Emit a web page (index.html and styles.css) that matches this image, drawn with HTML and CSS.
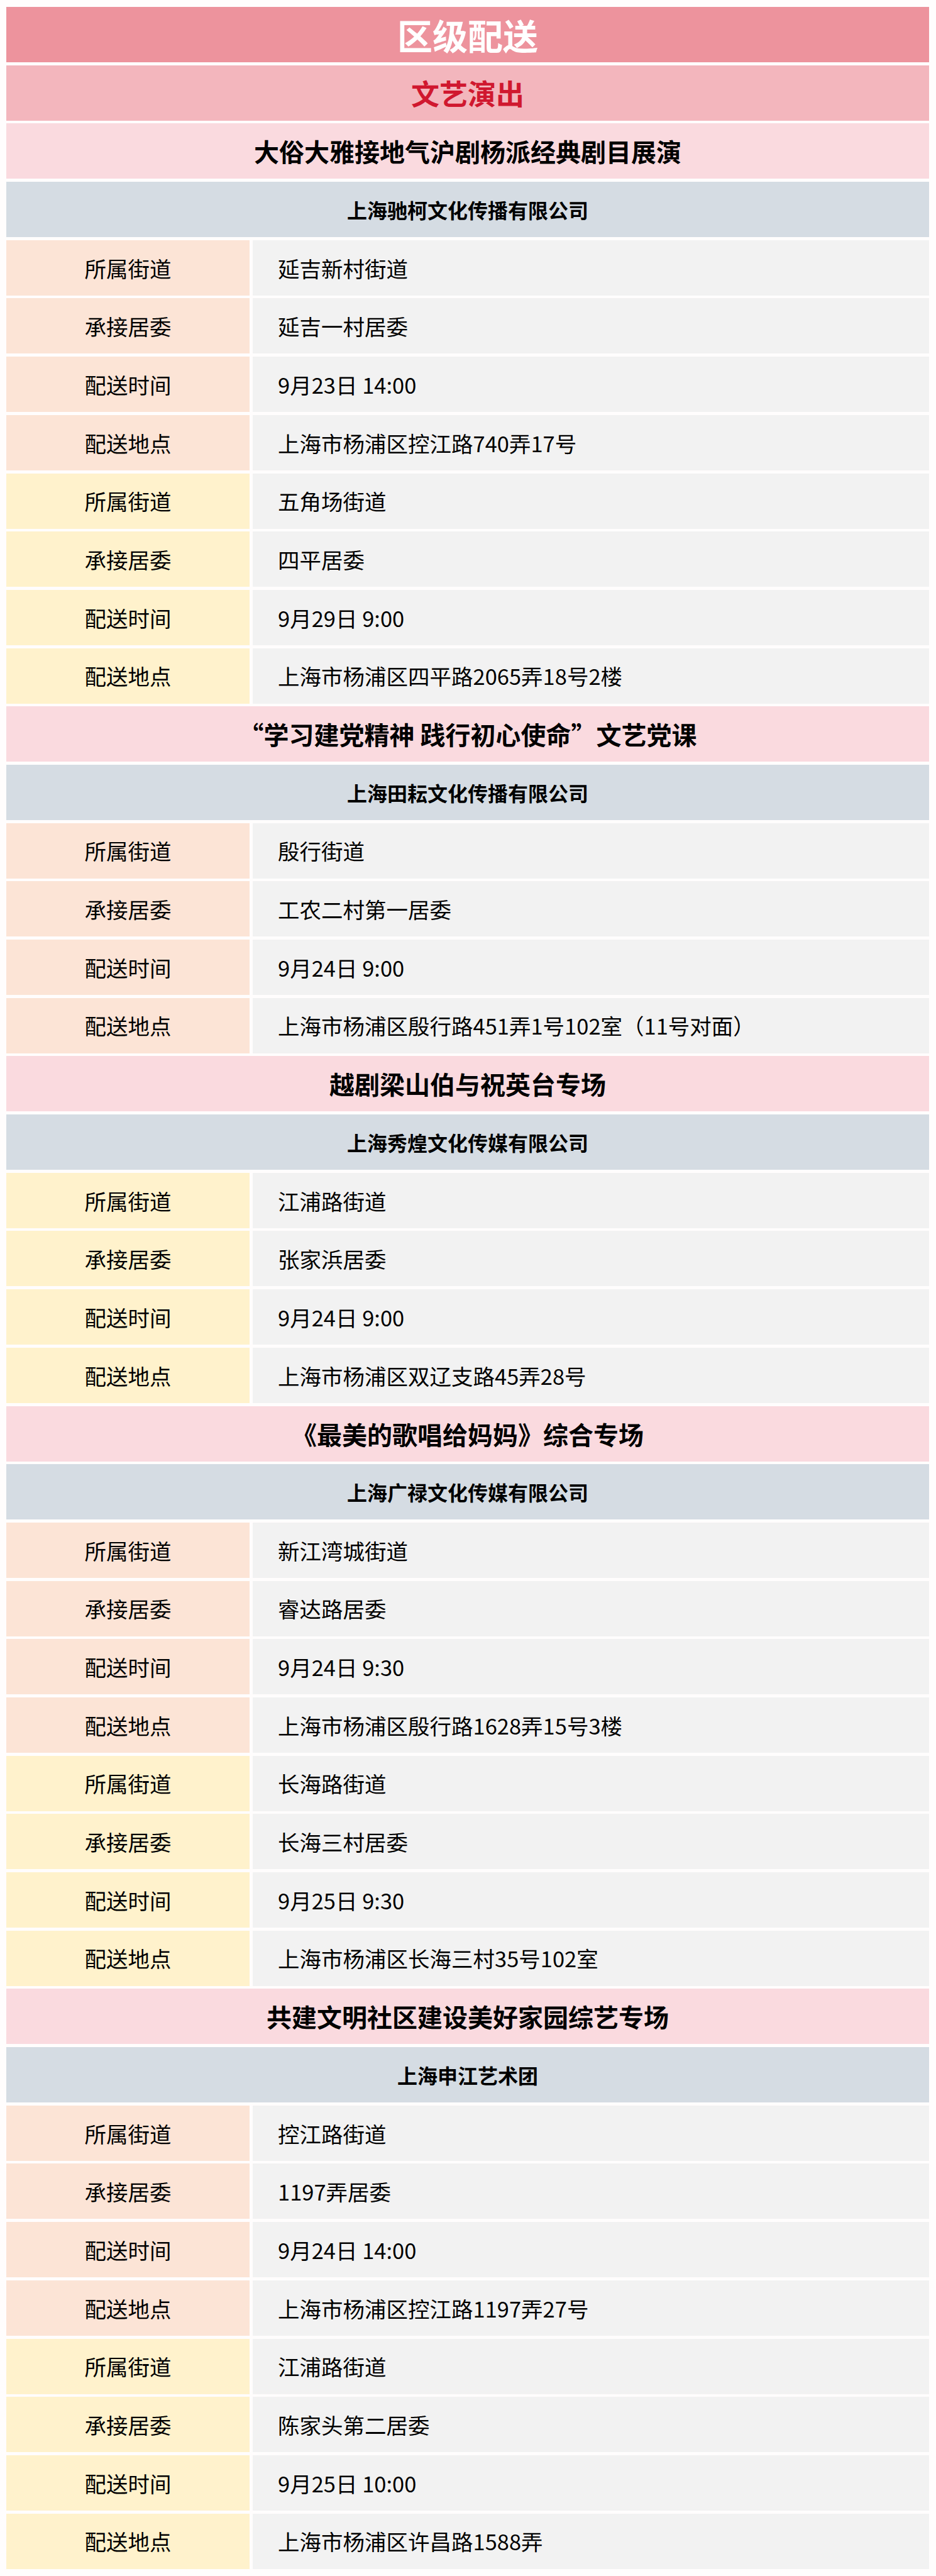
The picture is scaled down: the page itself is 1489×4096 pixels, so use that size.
FILE: index.html
```html
<!DOCTYPE html>
<html lang="zh-CN">
<head>
<meta charset="utf-8">
<title>区级配送</title>
<link rel="stylesheet" href="styles.css">
</head>
<body>
<div class="page">
  <div class="band title">区级配送</div>
  <div class="band section">文艺演出</div>

  <div class="band item">大俗大雅接地气沪剧杨派经典剧目展演</div>
  <div class="band company">上海驰柯文化传播有限公司</div>
  <div class="row peach"><div class="label">所属街道</div><div class="value">延吉新村街道</div></div>
  <div class="row peach"><div class="label">承接居委</div><div class="value">延吉一村居委</div></div>
  <div class="row peach"><div class="label">配送时间</div><div class="value">9月23日 14:00</div></div>
  <div class="row peach"><div class="label">配送地点</div><div class="value">上海市杨浦区控江路740弄17号</div></div>
  <div class="row yellow"><div class="label">所属街道</div><div class="value">五角场街道</div></div>
  <div class="row yellow"><div class="label">承接居委</div><div class="value">四平居委</div></div>
  <div class="row yellow"><div class="label">配送时间</div><div class="value">9月29日 9:00</div></div>
  <div class="row yellow"><div class="label">配送地点</div><div class="value">上海市杨浦区四平路2065弄18号2楼</div></div>

  <div class="band item">“学习建党精神 践行初心使命”文艺党课</div>
  <div class="band company">上海田耘文化传播有限公司</div>
  <div class="row peach"><div class="label">所属街道</div><div class="value">殷行街道</div></div>
  <div class="row peach"><div class="label">承接居委</div><div class="value">工农二村第一居委</div></div>
  <div class="row peach"><div class="label">配送时间</div><div class="value">9月24日 9:00</div></div>
  <div class="row peach"><div class="label">配送地点</div><div class="value">上海市杨浦区殷行路451弄1号102室（11号对面）</div></div>

  <div class="band item">越剧梁山伯与祝英台专场</div>
  <div class="band company">上海秀煌文化传媒有限公司</div>
  <div class="row yellow"><div class="label">所属街道</div><div class="value">江浦路街道</div></div>
  <div class="row yellow"><div class="label">承接居委</div><div class="value">张家浜居委</div></div>
  <div class="row yellow"><div class="label">配送时间</div><div class="value">9月24日 9:00</div></div>
  <div class="row yellow"><div class="label">配送地点</div><div class="value">上海市杨浦区双辽支路45弄28号</div></div>

  <div class="band item">《最美的歌唱给妈妈》综合专场</div>
  <div class="band company">上海广禄文化传媒有限公司</div>
  <div class="row peach"><div class="label">所属街道</div><div class="value">新江湾城街道</div></div>
  <div class="row peach"><div class="label">承接居委</div><div class="value">睿达路居委</div></div>
  <div class="row peach"><div class="label">配送时间</div><div class="value">9月24日 9:30</div></div>
  <div class="row peach"><div class="label">配送地点</div><div class="value">上海市杨浦区殷行路1628弄15号3楼</div></div>
  <div class="row yellow"><div class="label">所属街道</div><div class="value">长海路街道</div></div>
  <div class="row yellow"><div class="label">承接居委</div><div class="value">长海三村居委</div></div>
  <div class="row yellow"><div class="label">配送时间</div><div class="value">9月25日 9:30</div></div>
  <div class="row yellow"><div class="label">配送地点</div><div class="value">上海市杨浦区长海三村35号102室</div></div>

  <div class="band item">共建文明社区建设美好家园综艺专场</div>
  <div class="band company">上海申江艺术团</div>
  <div class="row peach"><div class="label">所属街道</div><div class="value">控江路街道</div></div>
  <div class="row peach"><div class="label">承接居委</div><div class="value">1197弄居委</div></div>
  <div class="row peach"><div class="label">配送时间</div><div class="value">9月24日 14:00</div></div>
  <div class="row peach"><div class="label">配送地点</div><div class="value">上海市杨浦区控江路1197弄27号</div></div>
  <div class="row yellow"><div class="label">所属街道</div><div class="value">江浦路街道</div></div>
  <div class="row yellow"><div class="label">承接居委</div><div class="value">陈家头第二居委</div></div>
  <div class="row yellow"><div class="label">配送时间</div><div class="value">9月25日 10:00</div></div>
  <div class="row yellow"><div class="label">配送地点</div><div class="value">上海市杨浦区许昌路1588弄</div></div>
</div>
</body>
</html>
```

FILE: styles.css
```css
html, body {
  margin: 0;
  padding: 0;
  background: #fffdfd;
}

body {
  font-family: "Noto Sans CJK SC", "Noto Sans", sans-serif;
  color: #000;
}

.page {
  display: flex;
  flex-direction: column;
  gap: 4.7px;
  padding: 11px 11px 11px 10px;
}

.band {
  height: 88px;
  display: flex;
  align-items: center;
  justify-content: center;
  font-weight: 700;
  line-height: 1;
}

.title {
  background: #ed939d;
  color: #ffffff;
  font-size: 56px;
}

.section {
  background: #f3b6bd;
  color: #d0182f;
  font-size: 45px;
}

.item {
  background: #fadadf;
  font-size: 40px;
}

.company {
  background: #d5dce3;
  font-size: 32px;
}

.row {
  height: 88px;
  display: grid;
  grid-template-columns: 387px 1fr;
  column-gap: 5px;
  font-size: 34.5px;
  line-height: 1;
}

.label {
  display: flex;
  align-items: center;
  justify-content: center;
}

.value {
  display: flex;
  align-items: center;
  padding-left: 40px;
  background: #f2f2f2;
}

.peach .label {
  background: #fce4d6;
}

.yellow .label {
  background: #fff2cc;
}
```
